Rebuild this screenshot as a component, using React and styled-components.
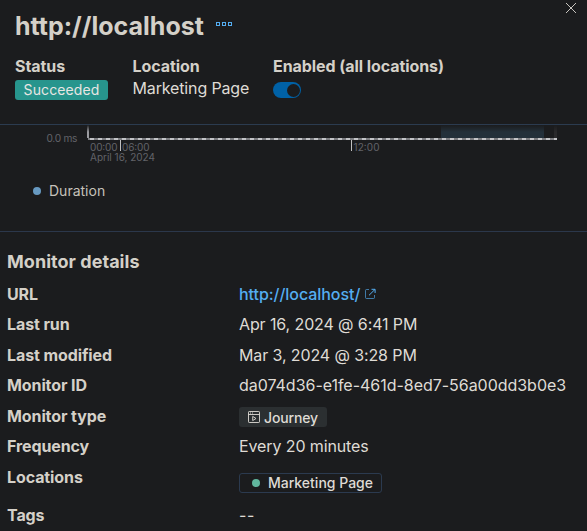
import React from 'react';
import styled, { createGlobalStyle } from 'styled-components';

const Global = createGlobalStyle`
  * { box-sizing: border-box; }
  html, body { margin: 0; background: #1b1c1e; overflow: hidden; }
  body { font-family: Inter, sans-serif; font-size: 16px; color: #dfdbd5; }
`;

const Flyout = styled.div`
  width: 587px;
  height: 531px;
  overflow: hidden;
  background: #1b1c1e;
  display: flex;
  flex-direction: column;
`;
const Header = styled.header`
  height: 125px;
  flex: none;
  border-bottom: 1px solid #2b3b4f;
  padding: 8px 10px 0 15px;
`;
const TitleRow = styled.div`
  display: flex;
  height: 48px;
`;
const Title = styled.h2`
  margin: 0;
  font-size: 25px;
  font-weight: 700;
  line-height: 36px;
  color: #d4d0c8;
  width: 200px;
  white-space: nowrap;
`;
const IconButton = styled.button`
  border: 0;
  padding: 0;
  background: none;
  display: flex;
  align-self: flex-start;
  color: ${(p) => p.$color};
  margin: ${(p) => p.$margin};
`;
const Stats = styled.div`
  display: grid;
  grid-template-columns: 117.5px 140.5px 1fr;
`;
const Label = styled.div`
  font-weight: 700;
  line-height: 20px;
  letter-spacing: -0.07px;
  color: #d4d0c8;
  white-space: nowrap;
`;
const StatValue = styled.div`
  line-height: 24px;
  height: 24px;
  letter-spacing: -0.14px;
`;
const StatusBadge = styled.span`
  display: block;
  width: 93px;
  height: 20px;
  margin-top: 4px;
  border-radius: 3px;
  background: #27958d;
  color: #e8e6e3;
  font-size: 14px;
  font-weight: 400;
  letter-spacing: 0.1px;
  line-height: 20px;
  text-align: center;
`;
const Switch = styled.button`
  display: flex;
  justify-content: flex-end;
  width: 28px;
  height: 16px;
  margin-top: 6px;
  padding: 1.5px;
  border: 0;
  border-radius: 8px;
  background: #0061a6;
`;
const Thumb = styled.span`
  width: 13px;
  height: 13px;
  border-radius: 50%;
  background: #1b1c1e;
`;
const ChartSection = styled.section`
  height: 107px;
  flex: none;
  border-bottom: 1px solid #2b374b;
`;
const ChartSvg = styled.svg`
  display: block;
  font-family: Inter, sans-serif;
  font-size: 10px;
`;
const Legend = styled.div`
  display: flex;
  align-items: center;
  gap: 8px;
  height: 20px;
  margin: 12px 0 0 33px;
  font-size: 14px;
  line-height: 20px;
  color: #c6c2ba;
`;
const Dot = styled.span`
  width: 8px;
  height: 8px;
  border-radius: 50%;
  background: ${(p) => p.$color};
`;
const Details = styled.section`
  padding: 18px 7px 0;
`;
const DetailsTitle = styled.h3`
  margin: 0 0 9px;
  font-size: 18px;
  font-weight: 700;
  letter-spacing: 0.04px;
  line-height: 24px;
  color: #d4d0c8;
`;
const List = styled.dl`
  margin: 0;
  display: grid;
  grid-template-columns: 232px 1fr;
  grid-template-rows: 30px 31px 30px 31px 30px 31px 38px 30px;
  line-height: 22px;
`;
const Term = styled.dt`
  font-weight: 700;
  letter-spacing: -0.1px;
  color: #d4d0c8;
`;
const Value = styled.dd`
  margin: 0;
  white-space: nowrap;
  letter-spacing: ${(p) => p.$tracking || '-0.11px'};
`;
const Link = styled.a`
  display: flex;
  align-items: center;
  gap: 4px;
  font-weight: 500;
  letter-spacing: -0.05px;
  color: #54adf1;
  text-decoration: none;
`;
const Tag = styled.span`
  display: flex;
  align-items: center;
  height: 20px;
  font-size: 14px;
  font-weight: 500;
  letter-spacing: 0;
  line-height: 18px;
  border-radius: 3px;
  width: ${(p) => (p.$outlined ? '143px' : '88px')};
  margin-top: ${(p) => (p.$outlined ? '7px' : '2px')};
  padding-left: ${(p) => (p.$outlined ? '12px' : '9px')};
  gap: ${(p) => (p.$outlined ? '8px' : '4px')};
  background: ${(p) => (p.$outlined ? 'transparent' : '#2b2f31')};
  border: ${(p) => (p.$outlined ? '1px solid #2b3a4f' : '0')};
`;
const TagText = styled.span`
  padding-top: 1px;
  letter-spacing: -0.15px;
`;

const MoreIcon = () => (
  <svg width="16" height="4" viewBox="0 0 16 4" fill="none" stroke="currentColor" shapeRendering="crispEdges">
    <path d="M.5.5h3v3h-3zM6.5.5h3v3h-3zM12.5.5h3v3h-3z" />
  </svg>
);
const CloseIcon = () => (
  <svg width="12" height="12" viewBox="0 0 12 12" fill="none" stroke="currentColor">
    <path d="M1 1l10 10M11 1L1 11" />
  </svg>
);
const ExternalIcon = () => (
  <svg width="12" height="12" viewBox="0 0 12 12" fill="none" stroke="currentColor">
    <path d="M5 1.5H2.5a1 1 0 0 0-1 1v7a1 1 0 0 0 1 1h7a1 1 0 0 0 1-1V7" opacity=".65" />
    <path d="M7.5 1.3h3.6V5M10.9 1.5L5 7.3" />
  </svg>
);
const JourneyIcon = () => (
  <svg width="12" height="12" viewBox="0 0 12 12" fill="none" stroke="currentColor" strokeWidth=".9">
    <rect x=".5" y=".5" width="11" height="11" rx=".7" />
    <path d="M.5 3.5h11M2 2h1M4 2h1M4.7 5.4v4.2L8 7.5z" />
  </svg>
);

const DurationChart = () => (
  <ChartSvg width="587" height="44" viewBox="0 0 587 44">
    <defs>
      <linearGradient id="fade" x1="0" y1="0" x2="0" y2="1">
        <stop offset="0" stopColor="#1b1c1e" />
        <stop offset="1" stopColor="#1b1c1e" stopOpacity="0" />
      </linearGradient>
    </defs>
    <rect x="441" y="0" width="103" height="13" fill="#23303a" />
    <rect x="87" y="0" width="2" height="13" fill="#9b9ba0" />
    <rect x="554" y="0" width="3" height="13" fill="#29292b" />
    <rect x="0" y="0" width="587" height="7" fill="url(#fade)" />
    <path d="M88 14H557" stroke="#7e7f83" strokeWidth="2" />
    <path d="M90 14H557" stroke="#c3c4c7" strokeWidth="2" strokeDasharray="4 4" />
    <path d="M120.5 15V26M351.5 15V26" stroke="#c0c0c0" />
    <g fill="#626369">
      <text x="46.5" y="17" textLength="31" fontSize="10.2">0.0 ms</text>
      <text x="90" y="26" textLength="27.5">00:00</text>
      <text x="122" y="26" textLength="27.5">06:00</text>
      <text x="353.5" y="26" textLength="26">12:00</text>
      <text x="90" y="36" textLength="65">April 16, 2024</text>
    </g>
  </ChartSvg>
);

export default function App() {
  return (
    <Flyout>
      <Global />
      <Header>
        <TitleRow>
          <Title>http://localhost</Title>
          <IconButton aria-label="Actions" $color="#54adf1" $margin="14px auto 0 1px"><MoreIcon /></IconButton>
          <IconButton aria-label="Close" $color="#c8c5c0" $margin="-6px 0 0"><CloseIcon /></IconButton>
        </TitleRow>
        <Stats>
          <div>
            <Label>Status</Label>
            <StatusBadge>Succeeded</StatusBadge>
          </div>
          <div>
            <Label>Location</Label>
            <StatValue>Marketing Page</StatValue>
          </div>
          <div>
            <Label>Enabled (all locations)</Label>
            <Switch role="switch" aria-checked="true"><Thumb /></Switch>
          </div>
        </Stats>
      </Header>
      <ChartSection>
        <DurationChart />
        <Legend><Dot $color="#6799c1" />Duration</Legend>
      </ChartSection>
      <Details>
        <DetailsTitle>Monitor details</DetailsTitle>
        <List>
          <Term>URL</Term>
          <Value><Link>http://localhost/<ExternalIcon /></Link></Value>
          <Term>Last run</Term>
          <Value>Apr 16, 2024 @ 6:41 PM</Value>
          <Term>Last modified</Term>
          <Value>Mar 3, 2024 @ 3:28 PM</Value>
          <Term>Monitor ID</Term>
          <Value $tracking="-0.03px">da074d36-e1fe-461d-8ed7-56a00dd3b0e3</Value>
          <Term>Monitor type</Term>
          <Value><Tag><JourneyIcon /><TagText>Journey</TagText></Tag></Value>
          <Term>Frequency</Term>
          <Value>Every 20 minutes</Value>
          <Term>Locations</Term>
          <Value><Tag $outlined><Dot $color="#61b79e" />Marketing Page</Tag></Value>
          <Term>Tags</Term>
          <Value $tracking="0.6px">--</Value>
        </List>
      </Details>
    </Flyout>
  );
}
